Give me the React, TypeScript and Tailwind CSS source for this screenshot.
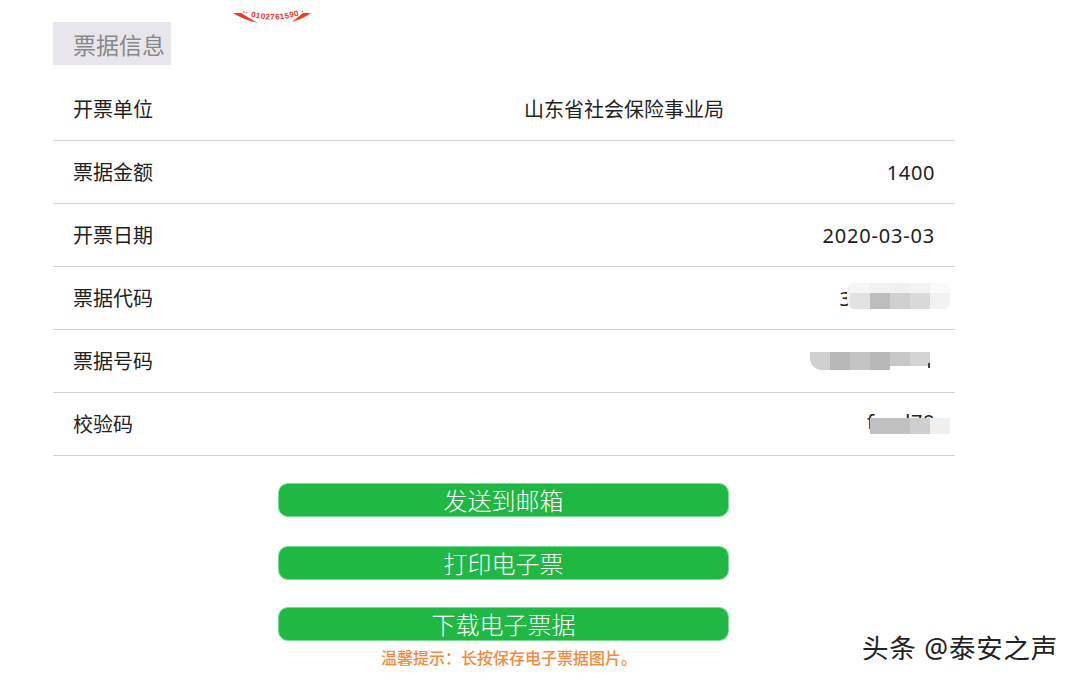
const font = { fontFamily: '"Noto Sans", "Noto Sans CJK SC", sans-serif' }

function Cells({ cells, className }: { cells: string[]; className: string }) {
  return (
    <div className={`flex ${className}`}>
      {cells.map((c, i) => (
        <div key={i} className={`w-5 ${c}`} />
      ))}
    </div>
  )
}

function Row({ label, children }: { label: string; children?: React.ReactNode }) {
  return (
    <div className="relative flex h-[63px] items-center justify-between border-b border-[#d2d2d2] pt-0.5 pr-5 pl-5 text-[20px] text-[#222]">
      <span>{label}</span>
      {children}
    </div>
  )
}

function Btn({ text, className }: { text: string; className?: string }) {
  return (
    <div
      className={`flex h-[34px] w-[451px] items-center justify-center rounded-[10px] border border-[#7fd896] bg-[#1fb842] pt-px text-[24px] leading-none font-light text-white ${className ?? ''}`}
    >
      {text}
    </div>
  )
}

export default function App() {
  return (
    <div className="relative h-[683px] w-[1080px] overflow-hidden bg-white pt-[22px] pl-[53px]" style={font}>
      {/* stamp edge */}
      <svg className="absolute top-[5px] left-[220px]" width="100" height="25" viewBox="0 0 100 25">
        <path d="M13 8 L21 8 Q29 13 38 18 Q24 15 13 8Z" fill="#f03a1e" />
        <path d="M91 8 L83 8 Q78 12 72 17 Q83 14 91 8Z" fill="#f03a1e" />
        <defs>
          <path id="stampArc" d="M22 9 Q52 20 84 9" />
        </defs>
        <text fontSize="8" fontWeight="700" fill="#e23a28" letterSpacing="0.5" fontFamily="Liberation Sans, sans-serif">
          <textPath href="#stampArc">·· 0102761590 ·</textPath>
        </text>
      </svg>

      <div className="flex h-[43px] w-[118px] items-center bg-[#e8e6ec] pt-1 pl-5 text-[23px] text-[#888]">票据信息</div>

      <div className="mt-[13px] w-[902px]">
        <Row label="开票单位">
          <span className="mr-[211px]">山东省社会保险事业局</span>
        </Row>
        <Row label="票据金额">
          <span className="tracking-[0.6px]">1400</span>
        </Row>
        <Row label="开票日期">
          <span className="tracking-[0.8px]">2020-03-03</span>
        </Row>
        <Row label="票据代码">
          <span className="mr-[84px]">3</span>
          <div className="absolute top-4 right-[5px] w-[103px] overflow-hidden rounded-lg bg-[#f0f0f0]">
            <Cells className="h-[10px] justify-end" cells={['bg-[#f6f6f6]', 'bg-[#f2f2f2]', 'bg-[#f0f0f0]', 'bg-[#f3f3f3]', 'bg-[#fafafa]']} />
            <Cells className="h-4 justify-end" cells={['bg-[#e2e2e2]', 'bg-[#bdbdbd]', 'bg-[#d0d0d0]', 'bg-[#dadada]', 'bg-[#f2f2f2]']} />
          </div>
        </Row>
        <Row label="票据号码">
          <div className="absolute top-[22px] right-[25px] flex">
            <Cells className="h-[18px] overflow-hidden rounded-bl-xl" cells={['bg-[#d0d0d0]', 'bg-[#b8b8b8]', 'bg-[#c4c4c4]', 'bg-[#b8b8b8]']} />
            <Cells className="h-[14px]" cells={['bg-[#c8c8c8]', 'bg-[#d4d4d4]']} />
            <div className="absolute right-0 bottom-[2px] h-[5px] w-[2px] bg-[#444]" />
          </div>
        </Row>
        <Row label="校验码">
          <span className="mb-[6px] tracking-[0.6px]">f a d78</span>
          <div className="absolute top-[25px] right-[5px]">
            <Cells className="h-[16px]" cells={['bg-[#c0c0c0]', 'bg-[#c0c0c0]', 'bg-[#cfcfcf]', 'bg-[#f0f0f0]']} />
          </div>
        </Row>

        <div className="mt-[27px] flex flex-col items-center gap-7 pr-px">
          <Btn text="发送到邮箱" />
          <Btn text="打印电子票" className="mt-px" />
          <Btn text="下载电子票据" className="-mt-px" />
        </div>
        <p className="mt-[7px] pl-[10px] text-center text-[16px] leading-5 font-medium text-[#f58a3c]">{'温馨提示\uFF1A长按保存电子票据图片。'}</p>
      </div>

      {/* watermark */}
      <div className="absolute top-[632px] left-[862px] text-[26.5px] leading-8 tracking-[0.8px] whitespace-nowrap text-[#222] [text-shadow:1px_1px_0_#fff]">
        头条 @泰安之声
      </div>
    </div>
  )
}
